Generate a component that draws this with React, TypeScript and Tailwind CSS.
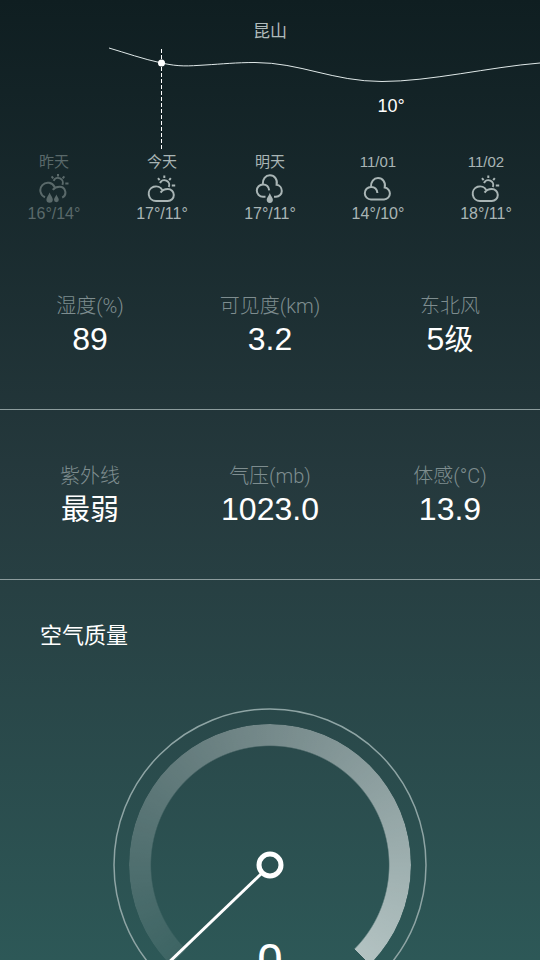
type IconName = "cloudy" | "sunShower" | "rain" | "overcast";

const forecast: { day: string; icon: IconName; temp: string; past?: boolean }[] = [
  { day: "昨天", icon: "sunShower", temp: "16°/14°", past: true },
  { day: "今天", icon: "cloudy", temp: "17°/11°" },
  { day: "明天", icon: "rain", temp: "17°/11°" },
  { day: "11/01", icon: "overcast", temp: "14°/10°" },
  { day: "11/02", icon: "cloudy", temp: "18°/11°" },
];

const rows = [
  [
    { label: "湿度(%)", value: "89" },
    { label: "可见度(km)", value: "3.2" },
    { label: "东北风", value: "5", unit: "级" },
  ],
  [
    { label: "紫外线", value: "", unit: "最弱" },
    { label: "气压(mb)", value: "1023.0" },
    { label: "体感(°C)", value: "13.9" },
  ],
];

function Drop({ x, y, r }: { x: number; y: number; r: number }) {
  return (
    <path
      d={`M${x} ${y - r * 2.2}C${x + r * 0.3} ${y - r * 1.3} ${x + r} ${y - r * 0.7} ${x + r} ${y}a${r} ${r} 0 0 1 ${-2 * r} 0C${x - r} ${y - r * 0.7} ${x - r * 0.3} ${y - r * 1.3} ${x} ${y - r * 2.2}z`}
      fill="currentColor"
      stroke="none"
    />
  );
}

function WeatherIcon({ name }: { name: IconName }) {
  return (
    <svg
      viewBox="0 0 30 30"
      className="h-[30px] w-[30px]"
      fill="none"
      stroke="currentColor"
      strokeWidth="2"
      aria-hidden="true"
    >
      {name === "cloudy" && (
        <>
          <path d="M9 27a7.3 7.3 0 1 1 6.4-10.8M13.6 18.6C15.300 16 18 15 20.800 15a6 6 0 0 1 0 12H9" />
          <path d="M13 9a4.800 4.800 0 0 1 8.800 4" />
          <path d="M17.300 1.500v2.600M11 4.200l1.600 2M23.800 4.200l-1.600 2M24.800 11.500h3.400" />
        </>
      )}
      {name === "sunShower" && (
        <>
          <path d="M6 23.200a7.500 7.500 0 1 1 9.600-10.200M13.800 15.800C15.400 13.600 18 12.800 20.600 12.800a5.700 5.700 0 0 1 2.600 10.800" />
          <path d="M14.600 6.800a4.800 4.800 0 0 1 8.800 4" />
          <path d="M19 0v2.400M12.600 2.400l1.600 2M25.300 2.400l-1.600 2M26.300 9.500h3.200" />
          <Drop x={10.6} y={25.6} r={3.2} />
          <Drop x={17.4} y={25.8} r={2.4} />
        </>
      )}
      {name === "rain" && (
        <>
          <path d="M10.500 22.800H8a6.200 6.200 0 0 1 0-12.400c3.400 0 5.800 2.400 6.200 6" />
          <path d="M7.800 10.200C7.400 5 10.600 1.300 14.900 1.300c4.600 0 8 4.200 6.700 9.400 3 .4 5.200 3.200 5.200 6.200a5.900 5.900 0 0 1-5.800 5.900H19" />
          <Drop x={14.8} y={25.8} r={3.1} />
        </>
      )}
      {name === "overcast" && (
        <>
          <path d="M8.200 13c3.400 0 5.800 2.400 6.200 6" />
          <path d="M8 25.400a6.200 6.200 0 0 1 0-12.400C7.600 7.800 10.800 4.100 15 4.100c4.600 0 8 4.200 6.700 9.400 3 .4 5.200 3.200 5.200 6a5.900 5.900 0 0 1-5.800 5.900z" />
        </>
      )}
    </svg>
  );
}

function TempCurve() {
  return (
    <svg viewBox="0 0 540 104" className="block w-full" role="img" aria-label="气温">
      <path
        d="M109 2C126 7 143 13 161.500 17S188 20 205 19 236 16.500 255 16.500C300 16.500 333 35.500 382 35.500C430 35.500 490 21 540 17"
        fill="none"
        stroke="#dfe8e8"
        strokeWidth="1"
      />
      <path d="M161.500 3V103" stroke="#ffffff" strokeWidth="1" strokeDasharray="4 2" />
      <circle cx="161.500" cy="17" r="3.500" fill="#ffffff" />
      <text x="391" y="66" textAnchor="middle" fill="#ffffff" className="font-['Liberation_Sans'] text-[18px]">
        10°
      </text>
    </svg>
  );
}

function Gauge() {
  return (
    <div className="relative mx-auto h-[314px] w-[314px]">
      {/* scale band */}
      <div className="absolute inset-4 rounded-full bg-[conic-gradient(from_225deg,rgba(255,255,255,0.08),rgba(255,255,255,0.64)_270deg,transparent_270deg)] [mask-image:radial-gradient(closest-side,transparent_84%,black_85%)]" />
      <svg viewBox="0 0 314 314" className="absolute inset-0" fill="none" aria-hidden="true">
        <circle cx="157" cy="157" r="156" stroke="#8fa5a5" strokeWidth="1.500" />
        <circle cx="157" cy="157" r="11" stroke="#ffffff" strokeWidth="5" />
        <path d="M148 166L50 260" stroke="#ffffff" strokeWidth="3" />
      </svg>
      <p className="absolute inset-x-0 top-[230px] text-center font-[Roboto] text-5xl leading-none text-white">0</p>
    </div>
  );
}

export default function App() {
  return (
    <main className="h-screen overflow-hidden bg-linear-to-b from-[#0f1e21] via-[#25393d] to-[#2d5857] font-['Liberation_Sans','Noto_Sans_CJK_SC',sans-serif] text-white">
      <h1 className="pt-5 text-center text-[17px] leading-6 text-[#b0bbbb]">昆山</h1>

      <div className="pt-0.5">
        <TempCurve />
      </div>

      <ul className="grid grid-cols-5">
        {forecast.map((d) => (
          <li
            key={d.day}
            className={`flex flex-col items-center ${d.past ? "text-[#5a696a]" : "text-[#a9b5b5]"}`}
          >
            <span className="text-[15px] leading-6">{d.day}</span>
            <WeatherIcon name={d.icon} />
            <span className="text-[16px] leading-5">{d.temp}</span>
          </li>
        ))}
      </ul>

      {rows.map((row, i) => (
        <dl
          key={i}
          className={`grid h-[170px] grid-cols-3 border-b border-[#8c9c9d] pt-[54px] text-center ${i === 0 ? "mt-4" : ""}`}
        >
          {row.map((s) => (
            <div key={s.label}>
              <dt className="font-[Roboto,'Noto_Sans_CJK_SC',sans-serif] text-[20px] leading-6 font-light text-[#7e8d8f]">
                {s.label}
              </dt>
              <dd className="text-[32px] leading-[42px]">
                {s.value}
                {s.unit && <span className="text-[29px]">{s.unit}</span>}
              </dd>
            </div>
          ))}
        </dl>
      ))}

      <section>
        <h2 className="px-10 pt-10 text-[22px] leading-8">空气质量</h2>
        <div className="pt-14">
          <Gauge />
        </div>
      </section>
    </main>
  );
}
